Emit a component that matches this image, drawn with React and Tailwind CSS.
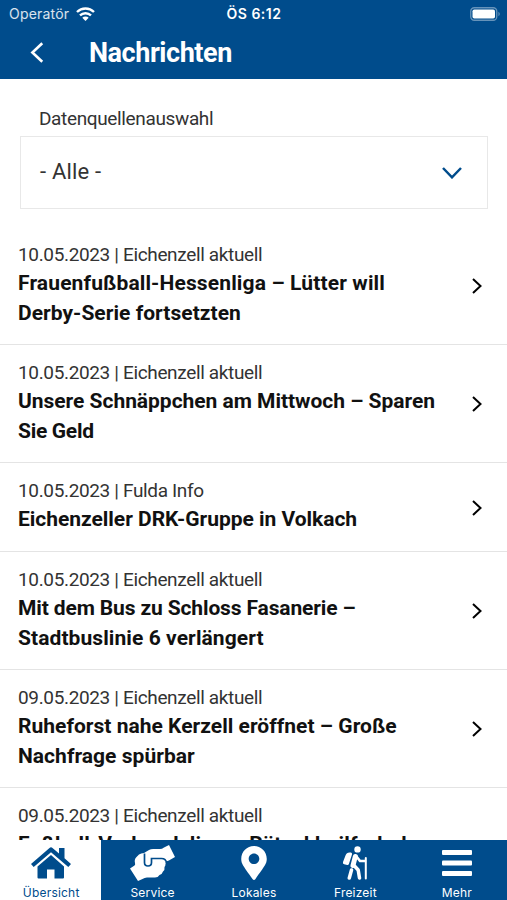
import React from 'react'
import { FaMapMarkerAlt } from 'react-icons/fa'

const news = [
  {
    date: '10.05.2023',
    source: 'Eichenzell aktuell',
    lines: [
      { text: 'Frauenfußball-Hessenliga – Lütter will', tracking: 'tracking-[0.13px]' },
      { text: 'Derby-Serie fortsetzten', tracking: 'tracking-[0.03px]' }
    ]
  },
  {
    date: '10.05.2023',
    source: 'Eichenzell aktuell',
    lines: [
      { text: 'Unsere Schnäppchen am Mittwoch – Sparen', tracking: 'tracking-[-0.03px]' },
      { text: 'Sie Geld', tracking: 'tracking-[-0.3px]' }
    ]
  },
  {
    date: '10.05.2023',
    source: 'Fulda Info',
    lines: [{ text: 'Eichenzeller DRK-Gruppe in Volkach', tracking: 'tracking-[-0.03px]' }]
  },
  {
    date: '10.05.2023',
    source: 'Eichenzell aktuell',
    lines: [
      { text: 'Mit dem Bus zu Schloss Fasanerie –', tracking: 'tracking-[-0.13px]' },
      { text: 'Stadtbuslinie 6 verlängert', tracking: 'tracking-[0.08px]' }
    ]
  },
  {
    date: '09.05.2023',
    source: 'Eichenzell aktuell',
    lines: [
      { text: 'Ruheforst nahe Kerzell eröffnet – Große', tracking: 'tracking-[0.02px]' },
      { text: 'Nachfrage spürbar', tracking: 'tracking-[0.03px]' }
    ]
  },
  {
    date: '09.05.2023',
    source: 'Eichenzell aktuell',
    lines: [{ text: 'Fußball-Verbandsliga – Rätzel heilfroh d', tracking: 'tracking-[0.2px]' }]
  }
]

function HomeIcon() {
  return (
    <svg className="w-10 h-8" viewBox="0 0 40 32" fill="currentColor">
      <path d="M18.500 1q1.500-1.300 3 0L28 6.600V1h5.500v10.300L40 17l-2.700 3L20 5.300 2.700 20 0 17z" />
      <path d="M20 8L6.500 19.500V30.500q0 1 1 1H16v-9h7.500v9h8.500q1 0 1-1v-11z" />
    </svg>
  )
}

function HandsIcon() {
  return (
    <svg className="w-[45px] h-9" viewBox="0 0 45 36">
      <path
        fill="currentColor"
        d="M0 23.500l4.500-3q1-.8.5-2.500-1-3.500 1.500-6L9 9.500Q11 8 14 8l5-3q2-1.200 5-1h6q2 0 4-1.500L39 0l6 12-3.500 2q-2.500 1.500-5.500 2.500L35.500 19q0 2-1 3 .5 3-1.500 4.500-1 3-3.500 3.500-1.500 2.500-4.500 2.500h-8q-2.500 0-4.500 1.500L8 36z"
      />
      <path
        d="M14.500 8.500v9q0 3.500 3.500 3.500t3.500-3.500v-4h10q4.500 0 5 4.500"
        fill="none"
        stroke="#004c8c"
        strokeWidth="1.7"
      />
    </svg>
  )
}

function HikerIcon() {
  return (
    <svg className="w-[26px] h-[34px]" viewBox="0 0 26 34" fill="none" stroke="currentColor" strokeLinecap="round" strokeLinejoin="round">
      <circle cx="15.500" cy="3.400" r="3.200" fill="currentColor" stroke="none" />
      <path d="M7.500 6.500q-3 0-4 3L1 16q-.6 1.800 1.200 2.300l3 .7q1.300.2 1.700-1L10 8.500q.4-1.600-1-1.900z" fill="currentColor" stroke="none" />
      <path d="M13.300 10.500L11 19.500" strokeWidth="5" />
      <path d="M14.500 10.500l3.500 4.500h5" strokeWidth="2.600" />
      <path d="M12.500 20l3.700 4 1.300 8" strokeWidth="3.500" />
      <path d="M9.500 24l-2.200 8" strokeWidth="3.500" />
      <path d="M23.800 12v20.500" strokeWidth="2" />
    </svg>
  )
}

function MenuIcon() {
  return (
    <svg className="w-[30px] h-[26px]" viewBox="0 0 30 26" fill="currentColor">
      <rect width="30" height="5" rx="1" />
      <rect y="10.500" width="30" height="5" rx="1" />
      <rect y="21" width="30" height="5" rx="1" />
    </svg>
  )
}

function Chevron({ className, width = 2 }) {
  return (
    <svg className={className} viewBox="0 0 10 16" fill="none" stroke="currentColor" strokeWidth={width}>
      <path d="M1 1l7.500 7L1 15" />
    </svg>
  )
}

const tabs = [
  { label: 'Übersicht', icon: <HomeIcon />, active: true },
  { label: 'Service', icon: <HandsIcon /> },
  { label: 'Lokales', icon: <FaMapMarkerAlt className="w-[26px] h-[34px]" /> },
  { label: 'Freizeit', icon: <HikerIcon /> },
  { label: 'Mehr', icon: <MenuIcon /> }
]

function StatusBar() {
  return (
    <div className="grid grid-cols-3 items-center h-[27px] pl-[9px] pr-[6px] font-[Inter,sans-serif]">
      <div className="flex items-center gap-[7px] text-sm tracking-[0.2px] text-white/85">
        Operatör
        <svg className="w-[19px] h-3.5 text-white" viewBox="0 0 19 14" fill="none" stroke="currentColor" strokeWidth="2.400">
          <path d="M1 5a12.200 12.200 0 0 1 17 0M4 8.400a8 8 0 0 1 11 0" />
          <path d="M9.500 14l-3.200-3.200a4.600 4.600 0 0 1 6.400 0z" fill="currentColor" stroke="none" />
        </svg>
      </div>
      <div className="-ml-[2px] text-center text-sm font-semibold tracking-[0.5px]">ÖS 6:12</div>
      <svg className="justify-self-end w-[31px] h-3.5" viewBox="0 0 31 14">
        <rect x=".75" y=".75" width="26" height="12.500" rx="3.500" fill="none" stroke="#fff" strokeOpacity=".4" strokeWidth="1.300" />
        <rect x="2.500" y="2.500" width="22.500" height="9" rx="1.800" fill="#fff" />
        <path d="M28.500 4.800c1.600.7 1.600 3.700 0 4.400z" fill="#fff" fillOpacity=".45" />
      </svg>
    </div>
  )
}

function App() {
  return (
    <div className="flex flex-col h-[900px] w-[507px] overflow-hidden bg-white font-[Roboto,sans-serif] text-[#111]">
      <header className="h-[79px] shrink-0 bg-[#004c8c] text-white">
        <StatusBar />
        <div className="flex items-center h-[50px] pl-[30px]">
          <Chevron className="w-3.5 h-[21px] rotate-180" />
          <h1 className="ml-[45px] pt-0.5 text-[27px] font-bold tracking-[-0.45px]">Nachrichten</h1>
        </div>
      </header>

      <main className="flex-1 min-h-0 overflow-hidden">
        <section className="pl-5 pr-[19px] pt-[25px]">
          <label className="block pl-[19px] h-8 leading-[29px] text-[19px] tracking-[-0.36px] text-[#333]">Datenquellenauswahl</label>
          <div className="flex items-center justify-between h-[73px] border-[1.5px] border-[#e8e8e8] pl-[19px] pr-[25px] text-[22px] text-[#333]">
            <span className="-mt-[3px] tracking-[0.2px]">- Alle -</span>
            <svg className="w-5 h-3 text-[#004c8c]" viewBox="0 0 20 12" fill="none" stroke="currentColor" strokeWidth="2.500">
              <path d="M1 1l9 9.300L19 1" />
            </svg>
          </div>
        </section>

        <ul className="mt-[18px]">
          {news.map((item, i) => (
            <li
              key={i}
              className="group flex items-center justify-between pl-[18px] pr-[25px] pt-[13px] pb-[15.800px] border-b border-[#e4e4e4]"
            >
              <div className="whitespace-nowrap group-last:min-h-[89px]">
                <p className="h-[29px] leading-[30px] text-[19px] tracking-[-0.35px] text-[#333]">
                  {item.date} | {item.source}
                </p>
                {item.lines.map(line => (
                  <p key={line.text} className={`leading-[29.700px] text-[21px] font-bold ${line.tracking}`}>
                    {line.text}
                  </p>
                ))}
              </div>
              <Chevron className="mt-1 w-2.5 h-4 text-black" />
            </li>
          ))}
        </ul>
      </main>

      <nav className="grid grid-cols-5 h-[60px] shrink-0 bg-[#004c8c] text-white font-[Inter,sans-serif]">
        {tabs.map(tab => (
          <div key={tab.label} className={`flex flex-col items-center pl-px ${tab.active ? 'bg-white text-[#004c8c]' : ''}`}>
            <div className="flex items-center justify-center h-[46px]">{tab.icon}</div>
            <span className="text-xs leading-[14px] tracking-[0.2px]">{tab.label}</span>
          </div>
        ))}
      </nav>
    </div>
  )
}

export default App
